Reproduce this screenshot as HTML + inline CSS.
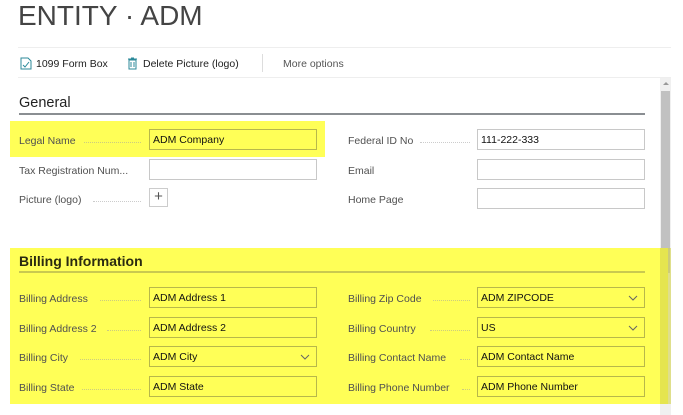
<!DOCTYPE html><html><head><style>
*{margin:0;padding:0;box-sizing:border-box}
body{width:683px;height:415px;overflow:hidden;background:#fff;font-family:"Liberation Sans",sans-serif;position:relative;color:#212121}
.a{position:absolute}
.lbl{position:absolute;font-size:10.5px;color:#505050;white-space:nowrap}
.dots{position:absolute;border-bottom:1px dotted #ccc;height:1px}
.in{position:absolute;height:21px;border:1px solid #c8c8c8;background:#fff;font-size:10.5px;padding:4px 3px 0;line-height:13px;color:#111}
.hl .in{background:transparent;border-color:#b8b84a}
.chev{position:absolute;right:6px;top:5px;width:10px;height:10px}
.ttl{position:absolute;font-size:14.5px;color:#222}
.line{position:absolute;height:2px;background:#8a8e92}
</style></head><body>
<div class="a" style="left:18px;top:0px;font-size:28px;font-weight:300;color:#444;letter-spacing:0px">ENTITY · ADM</div>
<div class="a" style="left:18px;top:47px;width:653px;height:1px;background:#eee"></div>
<svg class="a" style="left:20px;top:57px" width="12" height="13"><path d="M1 1h7l3 3v8H1z" fill="none" stroke="#2c8a9a"/><path d="M3 8l2 2 4-5" fill="none" stroke="#2c8a9a"/></svg>
<div class="a" style="left:36px;top:58px;font-size:10.5px">1099 Form Box</div>
<svg class="a" style="left:127px;top:57px" width="11" height="13"><path d="M1 2h9M4 1h3M2 3h7v9H2z" fill="none" stroke="#2c8a9a"/><path d="M4 5v5M7 5v5" stroke="#2c8a9a"/></svg>
<div class="a" style="left:143px;top:58px;font-size:10.5px">Delete Picture (logo)</div>
<div class="a" style="left:262px;top:54px;width:1px;height:18px;background:#ddd"></div>
<div class="a" style="left:283px;top:58px;font-size:10.5px;color:#555">More options</div>
<div class="a" style="left:18px;top:77px;width:653px;height:1px;background:#eee"></div>
<div class="a" style="left:660px;top:78px;width:11px;height:337px;background:#f0f0f0"></div>
<div class="a" style="left:661px;top:91px;width:9px;height:182px;background:#c1c1c1"></div>
<div class="a" style="left:663px;top:82px;width:0;height:0;border:3px solid transparent;border-bottom-color:#999;border-top:none"></div>

<div class="ttl" style="left:19px;top:95px">General</div>
<div class="line" style="left:19px;top:113px;width:626px"></div>
<div class="a" style="left:10px;top:121px;width:315px;height:36px;background:#ffff57"></div>
<div class="hl"><div class="lbl" style="left:19px;top:135px">Legal Name</div><div class="dots" style="left:84px;top:142px;width:57px;border-color:#cccc80"></div><div class="in" style="left:149px;top:129px;width:168px">ADM Company</div></div>
<div class="lbl" style="left:19px;top:165px">Tax Registration Num...</div><div class="in" style="left:149px;top:159px;width:168px"></div>
<div class="lbl" style="left:19px;top:194px">Picture (logo)</div><div class="dots" style="left:93px;top:201px;width:48px"></div>
<div class="a" style="left:149px;top:188px;width:19px;height:19px;border:1px solid #ccc;text-align:center;font-size:15px;line-height:16px;color:#555">+</div>
<div class="lbl" style="left:348px;top:135px">Federal ID No</div><div class="dots" style="left:420px;top:142px;width:50px"></div><div class="in" style="left:477px;top:129px;width:168px">111-222-333</div>
<div class="lbl" style="left:348px;top:165px">Email</div><div class="in" style="left:477px;top:159px;width:168px"></div>
<div class="lbl" style="left:348px;top:194px">Home Page</div><div class="in" style="left:477px;top:188px;width:168px"></div>

<div class="a hl" style="left:10px;top:248px;width:658px;height:156px;background:#ffff57"></div>
<div class="hl">
<div class="ttl" style="left:19px;top:253px;font-weight:bold;color:#2a2a10;font-size:14px">Billing Information</div>
<div class="line" style="left:19px;top:271px;width:626px;background:#c9c950"></div>
<div class="lbl" style="left:19px;top:293px">Billing Address</div><div class="dots" style="left:100px;top:300px;width:41px;border-color:#cccc80"></div><div class="in" style="left:149px;top:287px;width:168px">ADM Address 1</div>
<div class="lbl" style="left:19px;top:323px">Billing Address 2</div><div class="dots" style="left:107px;top:330px;width:34px;border-color:#cccc80"></div><div class="in" style="left:149px;top:317px;width:168px">ADM Address 2</div>
<div class="lbl" style="left:19px;top:352px">Billing City</div><div class="dots" style="left:80px;top:359px;width:61px;border-color:#cccc80"></div><div class="in" style="left:149px;top:346px;width:168px">ADM City<svg class="chev" viewBox="0 0 10 10"><path d="M1 3l4 4 4-4" fill="none" stroke="#666"/></svg></div>
<div class="lbl" style="left:19px;top:382px">Billing State</div><div class="dots" style="left:82px;top:389px;width:59px;border-color:#cccc80"></div><div class="in" style="left:149px;top:376px;width:168px">ADM State</div>
<div class="lbl" style="left:348px;top:293px">Billing Zip Code</div><div class="dots" style="left:433px;top:300px;width:37px;border-color:#cccc80"></div><div class="in" style="left:477px;top:287px;width:168px">ADM ZIPCODE<svg class="chev" viewBox="0 0 10 10"><path d="M1 3l4 4 4-4" fill="none" stroke="#666"/></svg></div>
<div class="lbl" style="left:348px;top:323px">Billing Country</div><div class="dots" style="left:430px;top:330px;width:40px;border-color:#cccc80"></div><div class="in" style="left:477px;top:317px;width:168px">US<svg class="chev" viewBox="0 0 10 10"><path d="M1 3l4 4 4-4" fill="none" stroke="#666"/></svg></div>
<div class="lbl" style="left:348px;top:352px">Billing Contact Name</div><div class="dots" style="left:460px;top:359px;width:10px;border-color:#cccc80"></div><div class="in" style="left:477px;top:346px;width:168px">ADM Contact Name</div>
<div class="lbl" style="left:348px;top:382px">Billing Phone Number</div><div class="dots" style="left:462px;top:389px;width:8px;border-color:#cccc80"></div><div class="in" style="left:477px;top:376px;width:168px">ADM Phone Number</div>
</div>
<div class="a" style="left:660px;top:248px;width:11px;height:156px;background:#d4d44a;opacity:.6"></div>
</body></html>
